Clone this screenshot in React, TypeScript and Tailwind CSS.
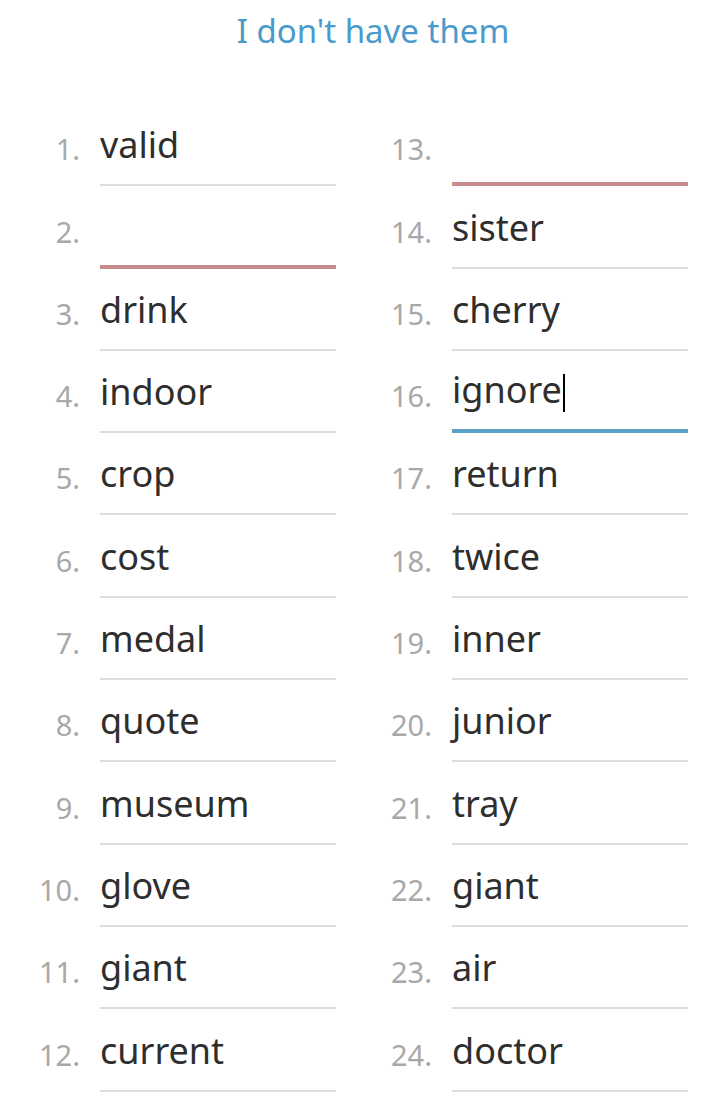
import React from 'react'

type Entry = { n: number; word: string; state?: 'error' | 'focus' }

const left: Entry[] = [
  { n: 1, word: 'valid' },
  { n: 2, word: '', state: 'error' },
  { n: 3, word: 'drink' },
  { n: 4, word: 'indoor' },
  { n: 5, word: 'crop' },
  { n: 6, word: 'cost' },
  { n: 7, word: 'medal' },
  { n: 8, word: 'quote' },
  { n: 9, word: 'museum' },
  { n: 10, word: 'glove' },
  { n: 11, word: 'giant' },
  { n: 12, word: 'current' },
]

const right: Entry[] = [
  { n: 13, word: '', state: 'error' },
  { n: 14, word: 'sister' },
  { n: 15, word: 'cherry' },
  { n: 16, word: 'ignore', state: 'focus' },
  { n: 17, word: 'return' },
  { n: 18, word: 'twice' },
  { n: 19, word: 'inner' },
  { n: 20, word: 'junior' },
  { n: 21, word: 'tray' },
  { n: 22, word: 'giant' },
  { n: 23, word: 'air' },
  { n: 24, word: 'doctor' },
]

function Row({ entry }: { entry: Entry }) {
  const line =
    entry.state === 'error'
      ? 'border-b-4 border-[#c98a8e]'
      : entry.state === 'focus'
        ? 'border-b-4 border-[#5b9fc4]'
        : 'border-b-2 border-[#dedede]'
  return (
    <div className="flex items-end h-[82.3px]">
      <div className="w-[80px] shrink-0 text-right text-[29px] text-[#a8a8a8] pb-[23px] leading-none">
        {entry.n}.
      </div>
      <div className={`ml-[20px] w-[236px] h-full flex items-end pb-[21px] ${line}`}>
        <span className="text-[36px] leading-none text-[#2e2e2e]">{entry.word}</span>
        {entry.state === 'focus' && <span className="w-[2px] h-[38px] bg-black ml-[1px] mb-[-4px]" />}
      </div>
    </div>
  )
}

export default function App() {
  return (
    <div className="w-[720px] h-[1097px] bg-white overflow-hidden" style={{ fontFamily: '"Noto Sans", "Open Sans", sans-serif' }}>
      <div className="pl-[26px] pt-[14px] text-center text-[33px] leading-none text-[#4a9acb]">I don't have them</div>
      <div className="grid grid-cols-[336px_336px] gap-x-[16px] mt-[57px]">
        <div className="flex flex-col">
          {left.map((e) => (
            <Row key={e.n} entry={e} />
          ))}
        </div>
        <div className="flex flex-col">
          {right.map((e) => (
            <Row key={e.n} entry={e} />
          ))}
        </div>
      </div>
    </div>
  )
}
